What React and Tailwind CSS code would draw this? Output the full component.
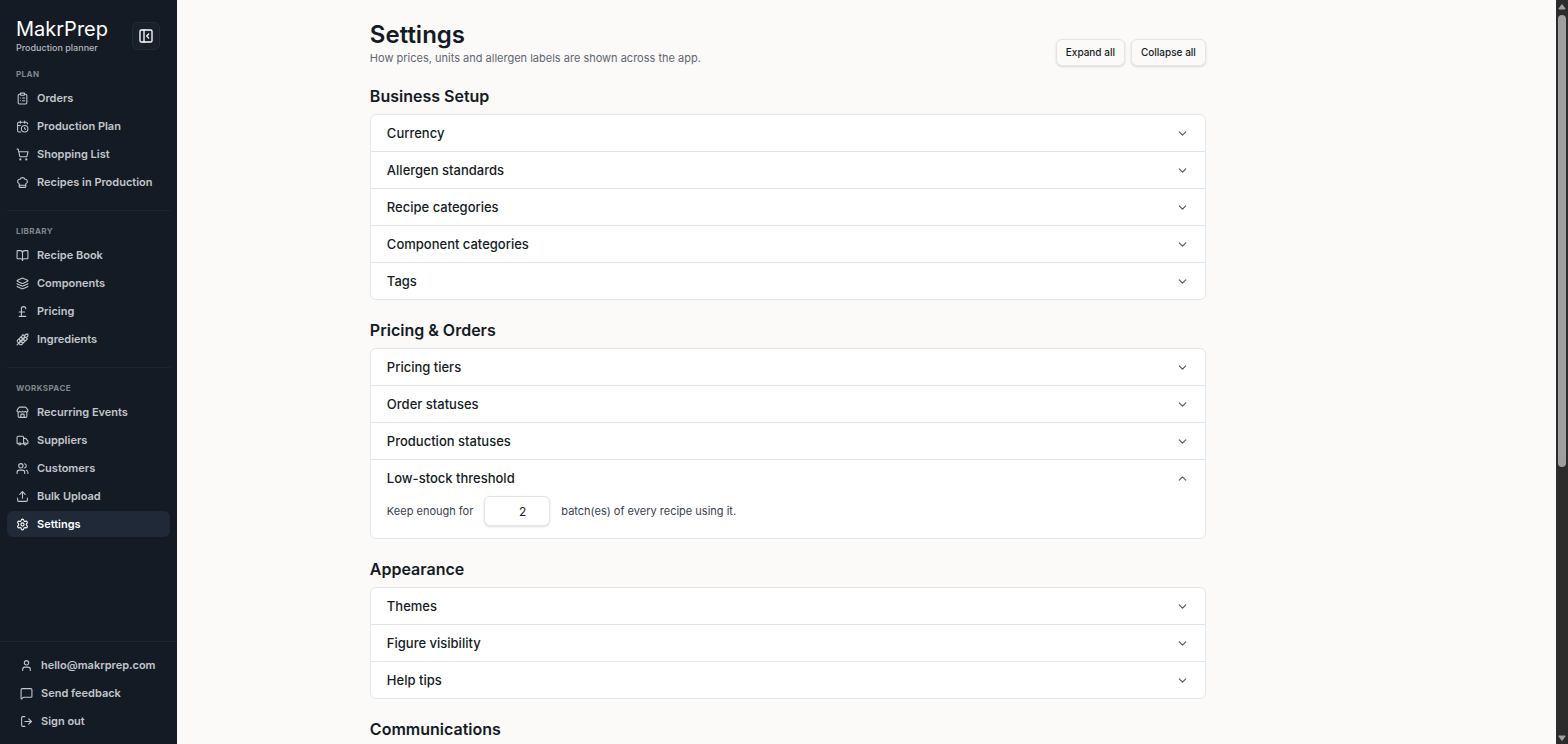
import { useState } from "react";
import {
  BookOpen,
  CalendarClock,
  ChefHat,
  ChevronDown,
  ChevronUp,
  ClipboardList,
  Layers,
  LogOut,
  MessageSquare,
  PanelLeftClose,
  PoundSterling,
  Settings,
  ShoppingCart,
  Store,
  Truck,
  Upload,
  User,
  Users,
  Wheat,
} from "lucide-react";

const navGroups = [
  {
    label: "Plan",
    items: [
      { name: "Orders", icon: ClipboardList },
      { name: "Production Plan", icon: CalendarClock },
      { name: "Shopping List", icon: ShoppingCart },
      { name: "Recipes in Production", icon: ChefHat },
    ],
  },
  {
    label: "Library",
    items: [
      { name: "Recipe Book", icon: BookOpen },
      { name: "Components", icon: Layers },
      { name: "Pricing", icon: PoundSterling },
      { name: "Ingredients", icon: Wheat },
    ],
  },
  {
    label: "Workspace",
    items: [
      { name: "Recurring Events", icon: Store },
      { name: "Suppliers", icon: Truck },
      { name: "Customers", icon: Users },
      { name: "Bulk Upload", icon: Upload },
      { name: "Settings", icon: Settings, active: true },
    ],
  },
];

const sections = [
  {
    title: "Business Setup",
    rows: ["Currency", "Allergen standards", "Recipe categories", "Component categories", "Tags"],
  },
  {
    title: "Pricing & Orders",
    rows: ["Pricing tiers", "Order statuses", "Production statuses", "Low-stock threshold"],
  },
  {
    title: "Appearance",
    rows: ["Themes", "Figure visibility", "Help tips"],
  },
  {
    title: "Communications",
    rows: [],
  },
];

const allRows = sections.flatMap((s) => s.rows);

function NavItem({ item }) {
  const Icon = item.icon;
  return (
    <a
      href="#"
      aria-current={item.active ? "page" : undefined}
      className={
        item.active
          ? "flex h-[26px] items-center gap-2 rounded-md bg-[#1f2937] px-[9px] whitespace-nowrap text-white"
          : "flex h-[26px] items-center gap-2 rounded-md px-[9px] whitespace-nowrap text-[#c3c6ca]"
      }
    >
      <Icon size={13} strokeWidth={2} className="shrink-0" />
      {item.name}
    </a>
  );
}

function Sidebar() {
  return (
    <aside className="flex w-[177px] shrink-0 flex-col bg-[#141b25] font-medium">
      <div className="flex items-center justify-between pt-[17px] pr-[17px] pl-4">
        <div>
          <p className="text-[20px] leading-[25px] font-normal text-white">MakrPrep</p>
          <p className="text-[9px] leading-[12px] text-[#b4b8bd]">Production planner</p>
        </div>
        <button
          aria-label="Collapse sidebar"
          className="flex size-7 items-center justify-center rounded-md border border-[#222a35] bg-[#19202b] text-white"
        >
          <PanelLeftClose size={16} strokeWidth={2} />
        </button>
      </div>

      <nav className="flex flex-col px-[7px] pt-[14px] text-[11px] font-semibold">
        {navGroups.map((group, i) => (
          <div key={group.label} className={i > 0 ? "mt-[15px] border-t border-[#1c2430] pt-[14px]" : ""}>
            <h2 className="px-[9px] text-[8px] leading-[12px] font-bold tracking-wider text-[#81868e] uppercase">
              {group.label}
            </h2>
            <div className="mt-[5px] flex flex-col gap-[2px]">
              {group.items.map((item) => (
                <NavItem key={item.name} item={item} />
              ))}
            </div>
          </div>
        ))}
      </nav>

      <div className="mt-auto flex flex-col gap-[2px] border-t border-[#1c2430] px-[11px] py-[10px] text-[11px] font-semibold">
        <NavItem item={{ name: "hello@makrprep.com", icon: User }} />
        <NavItem item={{ name: "Send feedback", icon: MessageSquare }} />
        <NavItem item={{ name: "Sign out", icon: LogOut }} />
      </div>
    </aside>
  );
}

// Body of the only section that is open by default
function LowStockForm() {
  const [batches, setBatches] = useState(2);
  return (
    <div className="flex items-center gap-[11px] px-4 pb-3 text-[11px] text-[#374151]">
      <label htmlFor="batches">Keep enough for</label>
      <input
        id="batches"
        type="number"
        value={batches}
        onChange={(e) => setBatches(e.target.value)}
        className="h-[30px] w-[66px] rounded-md border border-[#e3e5e8] bg-white pr-2 text-right text-[12px] text-[#141b25] shadow-sm"
      />
      <span>batch(es) of every recipe using it.</span>
    </div>
  );
}

function Row({ name, open, onToggle }) {
  const Chevron = open ? ChevronUp : ChevronDown;
  return (
    <div>
      <button
        aria-expanded={open}
        onClick={onToggle}
        className="flex h-9 w-full items-center justify-between px-4 text-[13px] leading-5 font-medium text-[#141b25]"
      >
        {name}
        <Chevron size={13} strokeWidth={2} className="text-[#4b5563]" />
      </button>
      {open && name === "Low-stock threshold" && <LowStockForm />}
    </div>
  );
}

function Scrollbar() {
  return (
    <div className="flex w-3 shrink-0 flex-col items-center bg-[#2c2c2c] text-[#9f9f9f]" aria-hidden="true">
      <svg width="12" height="15" viewBox="0 0 12 15" fill="currentColor">
        <path d="M6 4.5 9.2 9H2.8Z" stroke="currentColor" strokeLinejoin="round" />
      </svg>
      <div className="flex w-full grow flex-col items-center">
        <div className="h-[63%] w-2 rounded-full bg-[#9f9f9f]" />
      </div>
      <svg width="12" height="12" viewBox="0 0 12 12" fill="currentColor">
        <path d="M6 8.5 9.2 4H2.8Z" stroke="currentColor" strokeLinejoin="round" />
      </svg>
    </div>
  );
}

function App() {
  const [openRows, setOpenRows] = useState(["Low-stock threshold"]);

  const toggle = (name) => {
    setOpenRows((prev) => (prev.includes(name) ? prev.filter((n) => n !== name) : [...prev, name]));
  };

  const smallButton =
    "h-[27px] rounded-md border border-[#e3e5e8] bg-[#fbfaf8] px-[9px] text-[10px] font-medium text-[#141b25] shadow-sm";

  return (
    <div className="flex h-screen overflow-hidden bg-[#fbfaf8] font-['Inter',sans-serif] text-[#141b25]">
      <Sidebar />

      <main className="min-w-0 grow overflow-hidden pl-[12.3%]">
        <div className="max-w-[836px]">
          <header className="flex items-end justify-between pt-5">
            <div>
              <h1 className="text-[24px] leading-[30px] font-semibold">Settings</h1>
              <p className="text-[11px] leading-[16px] text-[#5f6672]">
                How prices, units and allergen labels are shown across the app.
              </p>
            </div>
            <div className="flex gap-[6px]">
              <button className={smallButton} onClick={() => setOpenRows(allRows)}>
                Expand all
              </button>
              <button className={smallButton} onClick={() => setOpenRows([])}>
                Collapse all
              </button>
            </div>
          </header>

          <div className="flex flex-col gap-[18px] pt-[18px]">
            {sections.map((section) => (
              <section key={section.title}>
                <h2 className="text-[16px] leading-6 font-semibold">{section.title}</h2>
                {section.rows.length > 0 && (
                  <div className="mt-[6px] divide-y divide-[#e3e5e8] rounded-md border border-[#e3e5e8] bg-white">
                    {section.rows.map((name) => (
                      <Row key={name} name={name} open={openRows.includes(name)} onToggle={() => toggle(name)} />
                    ))}
                  </div>
                )}
              </section>
            ))}
          </div>
        </div>
      </main>

      <Scrollbar />
    </div>
  );
}

export default App;
